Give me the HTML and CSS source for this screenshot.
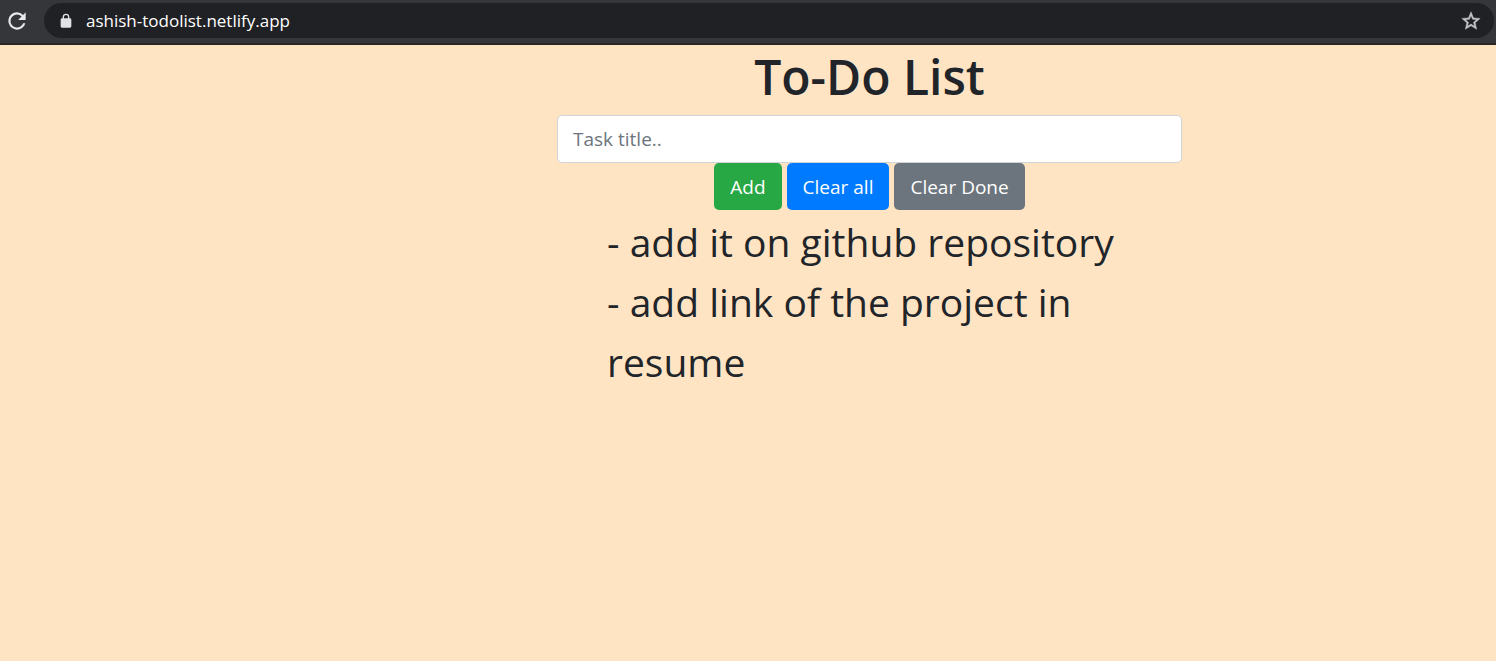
FILE: index.html
```html
<!DOCTYPE html>
<html lang="en">
<head>
<meta charset="utf-8">
<meta name="viewport" content="width=device-width, initial-scale=1">
<title>To-Do List</title>
<link rel="stylesheet" href="styles.css">
</head>
<body>
<header class="toolbar">
  <button class="icon-button reload" type="button" aria-label="Reload">
    <svg width="26" height="26" viewBox="0 0 24 24" fill="#e8eaed"><path d="M17.65 6.35A7.96 7.96 0 0 0 12 4a8 8 0 1 0 7.73 10h-2.08A6 6 0 1 1 12 6c1.66 0 3.14.69 4.22 1.78L13 11h7V4z"/></svg>
  </button>
  <div class="address">
    <svg class="lock" width="16" height="16" viewBox="0 0 24 24" fill="#e0e2e6"><path d="M18 8h-1V6A5 5 0 0 0 7 6v2H6a2 2 0 0 0-2 2v10a2 2 0 0 0 2 2h12a2 2 0 0 0 2-2V10a2 2 0 0 0-2-2zM9 6a3 3 0 0 1 6 0v2H9z"/></svg>
    <a class="url" href="#">ashish-todolist.netlify.app</a>
    <button class="icon-button" type="button" aria-label="Bookmark this page">
      <svg width="22" height="22" viewBox="0 0 24 24" fill="#c4c7cc" stroke="#c4c7cc" stroke-width=".5"><path d="M22 9.24l-7.19-.62L12 2 9.19 8.63 2 9.24l5.46 4.73L5.82 21 12 17.27 18.18 21l-1.63-7.03zM12 15.4l-3.76 2.27 1-4.28-3.32-2.88 4.38-.38L12 6.1l1.71 4.04 4.38.38-3.32 2.88 1 4.28z"/></svg>
    </button>
  </div>
</header>
<main class="todo">
  <h1 class="title">To-Do List</h1>
  <form class="form">
    <input class="field" type="text" placeholder="Task title.." aria-label="Task title">
    <div class="actions">
      <button class="button add" type="button">Add</button>
      <button class="button clear-all" type="button">Clear all</button>
      <button class="button clear-done" type="button">Clear Done</button>
    </div>
  </form>
  <ul class="tasks">
    <li>- add it on github repository</li>
    <li>- add link of the project in resume</li>
  </ul>
</main>
</body>
</html>
```

FILE: styles.css
```css
* {
  box-sizing: border-box;
}

body {
  margin: 0;
  min-height: 100vh;
  background: #ffe4c4;
  color: #212529;
  font-family: "Segoe UI", "Open Sans", "Noto Sans", sans-serif;
}

.toolbar {
  display: flex;
  align-items: center;
  gap: 14px;
  padding: 3px 2px 5px 4px;
  background: #35363a;
  border-bottom: 2px solid #2b2624;
}

.icon-button {
  display: flex;
  padding: 0;
  border: 0;
  background: none;
}

.address {
  flex: 1;
  display: flex;
  align-items: center;
  gap: 12px;
  height: 35px;
  padding: 0 12px 0 14px;
  border-radius: 18px;
  background: #202124;
}

.url {
  flex: 1;
  color: #fff;
  font-size: 17px;
  line-height: 24px;
  text-decoration: none;
}

.todo {
  width: 625px;
  max-width: 100%;
  margin-left: max(0px, calc(50% - 191px));
}

.title {
  margin: 0;
  padding: 2px 0 8px;
  font-size: 48px;
  line-height: 60px;
  font-weight: 600;
  text-align: center;
}

.field {
  display: block;
  width: 100%;
  height: 48px;
  padding: 8px 15px;
  border: 1px solid #ced4da;
  border-radius: 5px;
  background: #fff;
  color: #495057;
  font: inherit;
  font-size: 19px;
}

.field::placeholder {
  color: #6c757d;
  opacity: 1;
}

.actions {
  display: flex;
  justify-content: center;
  gap: 5px;
}

.button {
  height: 47px;
  padding: 0 16px;
  border: 0;
  border-radius: 5px;
  color: #fff;
  font: inherit;
  font-size: 19px;
}

.add {
  background: #28a745;
}

.clear-all {
  background: #007bff;
}

.clear-done {
  background: #6c757d;
}

.tasks {
  margin: 0;
  padding: 2px 0 0 50px;
  list-style: none;
  font-size: 39px;
  line-height: 60px;
}
```
